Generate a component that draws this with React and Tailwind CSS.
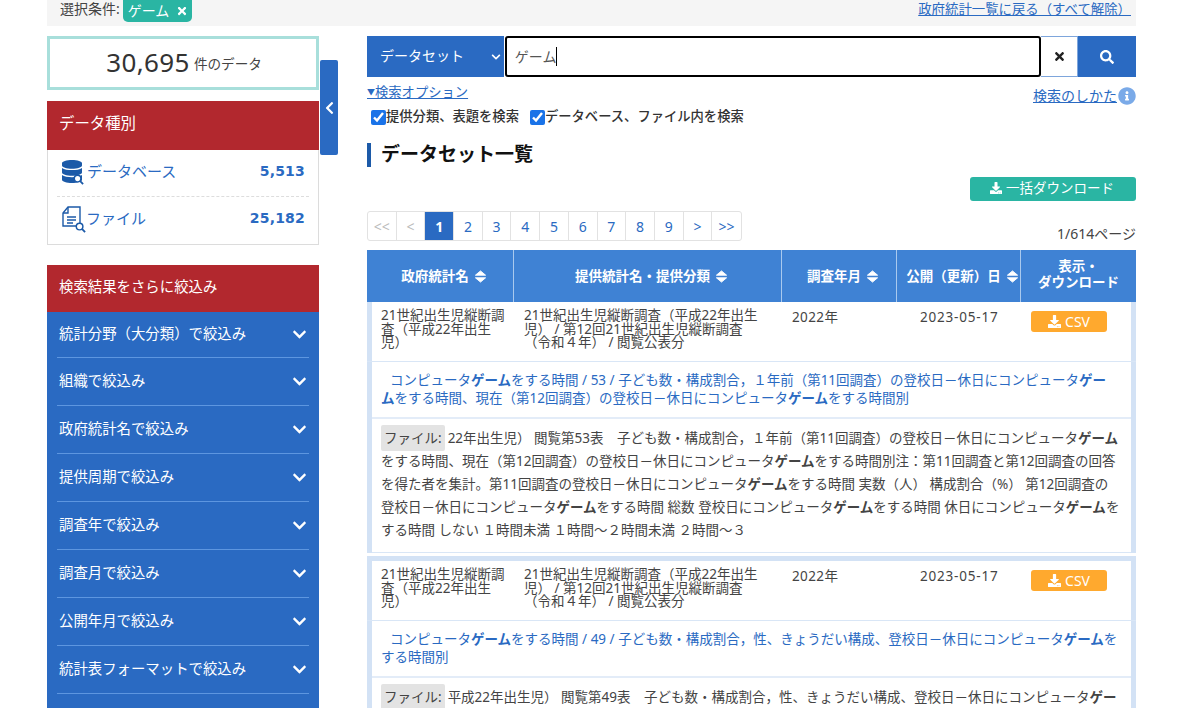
import React from 'react';
import { FaTimes, FaSearch, FaDownload, FaChevronDown, FaChevronLeft, FaInfoCircle, FaDatabase } from 'react-icons/fa';

const filters = [
  '統計分野（大分類）で絞込み',
  '組織で絞込み',
  '政府統計名で絞込み',
  '提供周期で絞込み',
  '調査年で絞込み',
  '調査月で絞込み',
  '公開年月で絞込み',
  '統計表フォーマットで絞込み',
  '',
];

const pages = ['<<', '<', '1', '2', '3', '4', '5', '6', '7', '8', '9', '>', '>>'];

const COLS = 'grid grid-cols-[147px_268px_115px_124px_115px]';

// bolds the search hit inside a text, the hit may run over a line break
function Hit({ text }) {
  const parts = text.split(/(ゲー\n?ム|ゲー$)/);
  return (
    <>
      {parts.map((p, i) => (i % 2 === 1 ? <b key={i} className="font-bold">{p}</b> : <React.Fragment key={i}>{p}</React.Fragment>))}
    </>
  );
}

function MagnifierBadge() {
  return (
    <svg viewBox="0 0 12 12" className="absolute right-[-2px] bottom-[-2px] w-[11px] h-[11px]">
      <circle cx="5" cy="5" r="3.6" fill="#fff" stroke="#1c5aa8" strokeWidth="1.6" />
      <path d="M7.6 7.6 L11 11" stroke="#1c5aa8" strokeWidth="2" />
    </svg>
  );
}

function FileIcon() {
  return (
    <span className="relative w-[22px] h-[25px] block">
      <svg viewBox="0 0 22 25" className="w-[22px] h-[25px]" fill="none" stroke="#1c5aa8" strokeWidth="1.4">
        <path d="M6 1 H18 V20 H1 V7 Z" />
        <path d="M6 1 V7 H1" />
        <path d="M5 11 H14 M5 14 H14 M5 17 H11" />
      </svg>
      <MagnifierBadge />
    </span>
  );
}

function SortIcon() {
  return (
    <svg viewBox="0 0 13 14" className="w-[13px] h-[13px] ml-[1px]" fill="#fff" stroke="#fff" strokeWidth="1" strokeLinejoin="round">
      <path d="M6.5 1 L12 5.6 H1 Z" />
      <path d="M1 8.4 H12 L6.5 13 Z" />
    </svg>
  );
}

function HeadCell({ children }) {
  return (
    <div className="flex items-center justify-center gap-1 pl-[8px] text-white text-[13.5px] font-bold border-r border-[#a9c9ee]">
      {children}
      <SortIcon />
    </div>
  );
}

function Row({ link, body }) {
  return (
    <div className="border-x-[5px] border-[#d3e2f5] text-[13.5px] text-[#444]">
      <div className={`${COLS} h-[60px] -mx-[5px] px-[5px] border-b border-[#d9e6f6] leading-[13.5px]`}>
        <div className="pl-[9px] pt-[7px]">21世紀出生児縦断調<br />査（平成22年出生<br />児）</div>
        <div className="pl-[5px] pt-[7px] whitespace-nowrap">21世紀出生児縦断調査（平成22年出生<br />児） / 第12回21世紀出生児縦断調査<br />（令和４年） / 閲覧公表分</div>
        <div className="pl-[5px] pt-[7px] leading-[16px] tracking-[0.4px]">2022年</div>
        <div className="pl-[18px] pt-[7px] leading-[16px] tracking-[0.8px]">2023-05-17</div>
        <div className="pl-[5px] pt-[9px]">
          <span className="flex items-center justify-center gap-1 w-[76px] h-[21px] bg-[#ffa92e] rounded-[3px] text-white text-[14px]">
            <FaDownload className="w-[13px] h-[13px]" />CSV
          </span>
        </div>
      </div>
      <div className="h-[57px] px-[9px] pt-[9px] border-b-2 border-[#e3ecf8] text-[#2a6ac2] leading-[18px] whitespace-pre">
        <span className="pl-[9px]"><Hit text={link} /></span>
      </div>
      <div className="h-[134px] px-[9px] pt-[8px] leading-[23px] border-b border-[#d9e6f6] whitespace-pre overflow-hidden">
        <span className="bg-[#e3e3e3] rounded-[2px] px-[3px] py-[4px] mr-[3px]">ファイル:</span>
        <Hit text={body} />
      </div>
    </div>
  );
}

export default function App() {
  return (
    <div className="h-[708px] overflow-hidden bg-white text-[#333]" style={{ fontFamily: '"Noto Sans", "Noto Sans CJK JP", sans-serif' }}>
      <div className="w-[1089px] ml-[47px]">
        {/* Top bar */}
        <div className="h-[26px] bg-[#f5f5f5] flex justify-between pl-[13px] pr-[5px]">
          <div className="flex items-start text-[14px] text-[#444]">
            <span className="leading-[18px] mr-[3px]">選択条件:</span>
            <span className="flex items-center justify-between w-[69px] h-[22px] px-[5px] pr-[4px] bg-[#2ab5a3] rounded-b-[5px] text-white leading-none">
              ゲーム<FaTimes className="w-[12px] h-[12px]" />
            </span>
          </div>
          <a className="text-[13.4px] leading-[18px] text-[#2a6ac2] underline">政府統計一覧に戻る（すべて解除）</a>
        </div>

        <div className="flex mt-[10px]">
          {/* Sidebar */}
          <aside className="w-[272px] relative shrink-0">
            <div className="h-[54px] border-[3px] border-[#a8dfdb] flex items-center justify-center gap-[4px] pb-[3px] pl-[2px]">
              <span className="text-[26px] tracking-[0.4px] text-[#333] leading-none">30,695</span>
              <span className="text-[13.6px] text-[#444] mt-[5px]">件のデータ</span>
            </div>
            <button className="absolute left-[273px] top-[24px] w-[18px] h-[95px] bg-[#2a6ac2] rounded-[2px] flex items-center justify-center text-white">
              <FaChevronLeft className="w-[11px] h-[14px]" />
            </button>

            <div className="mt-[11px] border-x border-b border-[#dcdcdc]">
              <div className="h-[49px] -mx-px bg-[#b2282e] text-white text-[15.4px] flex items-center pl-[12px] pb-[3px]">データ種別</div>
              <div className="mx-[9px] h-[47px] border-b border-dashed border-[#ddd] flex items-center justify-between pr-[4px] pb-[3px] text-[#2a6ac2]">
                <span className="flex items-center gap-[5px] pl-[5px]">
                  <span className="relative block">
                    <FaDatabase className="w-[20px] h-[23px] text-[#1c5aa8]" />
                    <MagnifierBadge />
                  </span>
                  <span className="text-[15px]">データベース</span>
                </span>
                <span className="text-[14px] font-bold tracking-[0.2px]" style={{ fontFamily: '"DejaVu Sans", sans-serif' }}>5,513</span>
              </div>
              <div className="mx-[9px] h-[47px] flex items-center justify-between pr-[4px] pb-[5px] text-[#2a6ac2]">
                <span className="flex items-center gap-[2px] pl-[5px]">
                  <FileIcon />
                  <span className="text-[15px]">ファイル</span>
                </span>
                <span className="text-[14px] font-bold tracking-[0.2px]" style={{ fontFamily: '"DejaVu Sans", sans-serif' }}>25,182</span>
              </div>
            </div>

            <div className="mt-[20px]">
              <div className="h-[47px] bg-[#b2282e] text-white text-[14.4px] flex items-center pl-[12px] pb-[3px]">検索結果をさらに絞込み</div>
              <div className="bg-[#2a6ac2] px-[10px]">
                {filters.map((f, i) => (
                  <div key={i} className="h-[48px] first:h-[46px] border-b border-[#5d96e0] flex items-center justify-between pl-[2px] pr-[2px] pb-[1px] text-white text-[14.4px]">
                    {f}
                    <FaChevronDown className="w-[15px] h-[15px]" />
                  </div>
                ))}
              </div>
            </div>
          </aside>

          {/* Main */}
          <main className="w-[769px] ml-[48px] shrink-0">
            <div className="flex h-[41px]">
              <div className="w-[137px] bg-[#2a6ac2] text-white text-[14px] flex items-center justify-between pl-[13px] pr-[3px] pb-[2px]">
                データセット
                <FaChevronDown className="w-[10px] h-[10px] mt-[2px]" />
              </div>
              <div className="w-[537px] ml-px border-2 border-black rounded-[3px] flex items-center pl-[8px] text-[14px] text-[#555]">
                ゲーム<span className="w-px h-[19px] bg-black" />
              </div>
              <div className="w-[37px] border-y border-r border-[#7ea6dc] flex items-center justify-center text-[#222]">
                <FaTimes className="w-[13px] h-[13px]" />
              </div>
              <div className="w-[58px] bg-[#2a6ac2] flex items-center justify-center text-white">
                <FaSearch className="w-[14px] h-[14px]" />
              </div>
            </div>

            <div className="flex justify-between h-[32px]">
              <a className="text-[13.3px] text-[#2a6ac2] leading-[18px] mt-[6px] underline"><span className="text-[8px] align-[2px]">▼</span>検索オプション</a>
              <div className="flex items-center gap-[1px] mt-[8px] h-[21px] text-[#2a6ac2]">
                <a className="text-[14px] underline">検索のしかた</a>
                <FaInfoCircle className="w-[18px] h-[18px] text-[#7aaae8]" />
              </div>
            </div>

            <div className="flex items-center h-[16px] pl-[4px] text-[13.3px] text-[#333] font-medium">
              <input type="checkbox" readOnly checked className="w-[15px] h-[15px] m-0 accent-[#1a73e8]" />
              <span className="mr-[11px]">提供分類、表題を検索</span>
              <input type="checkbox" readOnly checked className="w-[15px] h-[15px] m-0 accent-[#1a73e8]" />
              <span>データベース、ファイル内を検索</span>
            </div>

            <h2 className="mt-[18px] h-[24px] border-l-4 border-[#1c5aa8] pl-[10px] text-[19px] font-bold text-[#111] leading-[22px]">データセット一覧</h2>

            <div className="flex justify-end mt-[10px]">
              <button className="w-[166px] h-[24px] bg-[#2ab5a3] rounded-[3px] text-white text-[13.5px] flex items-center justify-center gap-[4px] pb-[2px] pr-[2px]">
                <FaDownload className="w-[12px] h-[12px]" />一括ダウンロード
              </button>
            </div>

            <div className="flex justify-between items-end mt-[10px] h-[30px]">
              <div className="flex h-[30px] border border-[#e2e2e2] rounded-[3px]">
                {pages.map((p, i) => (
                  <span
                    key={i}
                    className={`flex items-center justify-center w-[28.7px] text-[14px] border-r last:border-r-0 border-[#e2e2e2] ${p === '1' ? 'bg-[#2a6ac2] text-white font-bold' : i < 2 ? 'text-[#bbb] text-[12px]' : 'text-[#2a6ac2]'}`}
                  >
                    {p}
                  </span>
                ))}
              </div>
              <span className="text-[14px] text-[#444] leading-[16px] mb-[-1px]">1/614ページ</span>
            </div>

            {/* Table */}
            <div className={`${COLS} h-[52px] bg-[#3f82d4] mt-[9px]`}>
              <HeadCell>政府統計名</HeadCell>
              <HeadCell>提供統計名・提供分類</HeadCell>
              <HeadCell>調査年月</HeadCell>
              <HeadCell>公開（更新）日</HeadCell>
              <div className="text-white text-[13.5px] font-bold text-center leading-[16px] pt-[8px]">表示・<br />ダウンロード</div>
            </div>

            <Row
              link={'コンピュータゲームをする時間 / 53 / 子ども数・構成割合，１年前（第11回調査）の登校日－休日にコンピュータゲー\nムをする時間、現在（第12回調査）の登校日－休日にコンピュータゲームをする時間別'}
              body={'22年出生児） 閲覧第53表　子ども数・構成割合，１年前（第11回調査）の登校日－休日にコンピュータゲーム\nをする時間、現在（第12回調査）の登校日－休日にコンピュータゲームをする時間別注：第11回調査と第12回調査の回答\nを得た者を集計。第11回調査の登校日－休日にコンピュータゲームをする時間 実数（人） 構成割合（%） 第12回調査の\n登校日－休日にコンピュータゲームをする時間 総数 登校日にコンピュータゲームをする時間 休日にコンピュータゲームを\nする時間 しない １時間未満 １時間～２時間未満 ２時間～３'}
            />
            <div className="mt-[3px] h-[5px] bg-[#d3e2f5]" />
            <Row
              link={'コンピュータゲームをする時間 / 49 / 子ども数・構成割合，性、きょうだい構成、登校日－休日にコンピュータゲームを\nする時間別'}
              body={'平成22年出生児） 閲覧第49表　子ども数・構成割合，性、きょうだい構成、登校日－休日にコンピュータゲー'}
            />
          </main>
        </div>
      </div>
    </div>
  );
}
